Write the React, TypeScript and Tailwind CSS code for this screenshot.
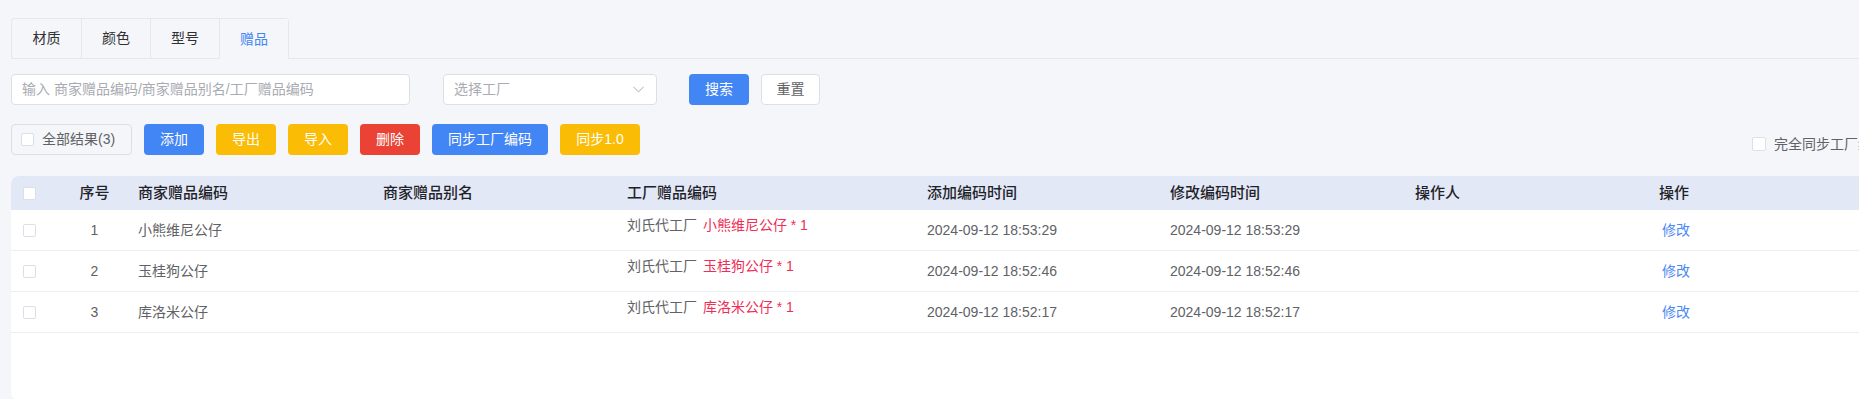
import React from "react";

const rows = [
  { no: 1, code: "小熊维尼公仔", gift: "小熊维尼公仔", add: "2024-09-12 18:53:29", mod: "2024-09-12 18:53:29" },
  { no: 2, code: "玉桂狗公仔", gift: "玉桂狗公仔", add: "2024-09-12 18:52:46", mod: "2024-09-12 18:52:46" },
  { no: 3, code: "库洛米公仔", gift: "库洛米公仔", add: "2024-09-12 18:52:17", mod: "2024-09-12 18:52:17" },
];

const grid =
  "grid grid-cols-[50px_67px_245px_244px_300px_243px_245px_244px_240px]";

function Box() {
  return <span className="block w-[13px] h-[13px] border border-[#dcdfe6] rounded-[2px] bg-white" />;
}

export default function App() {
  const tabs = ["材质", "颜色", "型号", "赠品"];
  return (
    <div className="w-[1859px] h-[399px] overflow-hidden bg-[#f5f6fa] font-['Liberation_Sans','Noto_Sans_CJK_SC',sans-serif] text-[14px]">
      <div className="w-[1897px] px-[11px] pt-[18px]">
        {/* tabs */}
        <div className="flex border-b border-[#e4e7ed]">
          <div className="flex border border-b-0 border-[#e4e7ed] rounded-t-[4px]">
            {tabs.map((t, i) => (
              <div
                key={t}
                className={
                  "w-[69px] flex items-center justify-center " +
                  (i > 0 ? "border-l border-[#e4e7ed] " : "") +
                  (i === 3
                    ? "h-[40px] -mb-px bg-[#f5f6fa] text-[#4285f4]"
                    : "h-[39px] text-[#303133]")
                }
              >
                {t}
              </div>
            ))}
          </div>
        </div>

        {/* search row */}
        <div className="flex items-center mt-[15px] h-[31px]">
          <div className="w-[399px] h-[31px] bg-white border border-[#dcdfe6] rounded-[4px] flex items-center pl-[10px] text-[#a8abb2]">
            输入 商家赠品编码/商家赠品别名/工厂赠品编码
          </div>
          <div className="ml-[33px] w-[214px] h-[31px] bg-white border border-[#dcdfe6] rounded-[4px] flex items-center justify-between pl-[10px] pr-[12px] text-[#a8abb2]">
            <span>选择工厂</span>
            <svg width="11" height="7" viewBox="0 0 11 7" fill="none">
              <path d="M0.5 0.8 L5.5 5.8 L10.5 0.8" stroke="#c0c4cc" strokeWidth="1.1" />
            </svg>
          </div>
          <button className="ml-[32px] w-[60px] h-[31px] rounded-[4px] bg-[#4285f4] text-white">搜索</button>
          <button className="ml-[12px] w-[59px] h-[31px] rounded-[4px] bg-white border border-[#dcdfe6] text-[#606266]">重置</button>
        </div>

        {/* action row */}
        <div className="flex items-stretch mt-[19px] h-[31px] gap-[12px]">
          <div className="w-[121px] h-[31px] border border-[#dcdfe6] rounded-[4px] flex items-center pl-[9px] gap-[8px] text-[#606266]">
            <Box />
            <span>全部结果(3)</span>
          </div>
          <button className="w-[60px] rounded-[4px] bg-[#4285f4] text-white">添加</button>
          <button className="w-[60px] rounded-[4px] bg-[#fbbc05] text-white">导出</button>
          <button className="w-[60px] rounded-[4px] bg-[#fbbc05] text-white">导入</button>
          <button className="w-[60px] rounded-[4px] bg-[#ea4335] text-white">删除</button>
          <button className="w-[116px] rounded-[4px] bg-[#4285f4] text-white">同步工厂编码</button>
          <button className="w-[80px] rounded-[4px] bg-[#fbbc05] text-white">同步1.0</button>
          <label className="ml-auto self-end flex items-center gap-[8px] leading-[22px] text-[#606266]">
            <span className="block w-[14px] h-[14px] border border-[#dcdfe6] rounded-[2px] bg-white" />
            <span>完全同步工厂编码</span>
          </label>
        </div>

        {/* table */}
        <div className="mt-[21px] h-[224px] bg-white rounded-[8px] overflow-hidden">
          <div className={grid + " h-[34px] bg-[#e2e8f6] items-center text-[15px] font-medium text-[#1f2329]"}>
            <div className="pl-[12px]"><Box /></div>
            <div className="text-center">序号</div>
            <div className="pl-[10px]">商家赠品编码</div>
            <div className="pl-[10px]">商家赠品别名</div>
            <div className="pl-[10px]">工厂赠品编码</div>
            <div className="pl-[10px]">添加编码时间</div>
            <div className="pl-[10px]">修改编码时间</div>
            <div className="pl-[10px]">操作人</div>
            <div className="pl-[10px]">操作</div>
          </div>
          {rows.map((r) => (
            <div key={r.no} className={grid + " h-[41px] border-b border-[#ebeef5] items-center text-[#606266]"}>
              <div className="pl-[12px]"><Box /></div>
              <div className="text-center">{r.no}</div>
              <div className="pl-[10px]">{r.code}</div>
              <div className="pl-[10px]"></div>
              <div className="pl-[10px] self-start pt-[5px]">
                刘氏代工厂 <span className="text-[#ef2d56] ml-[2px]">{r.gift} * 1</span>
              </div>
              <div className="pl-[10px]">{r.add}</div>
              <div className="pl-[10px]">{r.mod}</div>
              <div className="pl-[10px]"></div>
              <div className="pl-[13px] text-[#4a89f3]">修改</div>
            </div>
          ))}
        </div>
      </div>
    </div>
  );
}
